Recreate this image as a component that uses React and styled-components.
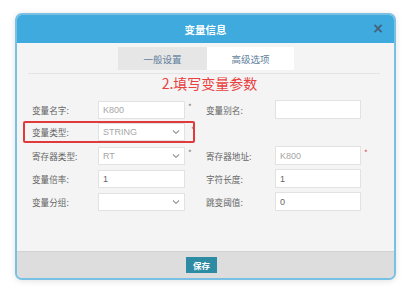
import React from "react";
import styled, { createGlobalStyle } from "styled-components";

const Global = createGlobalStyle`
  html, body { margin: 0; padding: 0; background: #ffffff; }
  body { font-family: "Noto Sans CJK SC", "Noto Sans", sans-serif; }
`;

const Page = styled.div`
  width: 404px;
  height: 290px;
  box-sizing: border-box;
  padding: 13px 8px 0 15px;
  overflow: hidden;
`;

const Dialog = styled.div`
  width: 381px;
  height: 267px;
  box-sizing: border-box;
  border: 2px solid #79c0e5;
  border-radius: 7px;
  overflow: hidden;
  display: flex;
  flex-direction: column;
  background: #f4f4f4;
  box-shadow: 0 1px 6px rgba(0, 0, 0, 0.12);
`;

const Header = styled.div`
  height: 28px;
  flex: none;
  background: #3eaade;
  display: flex;
  align-items: center;
  justify-content: center;
  position: relative;
  color: #ffffff;
  font-size: 10.5px;
  font-weight: 700;
`;

const Close = styled.span`
  position: absolute;
  right: 10px;
  top: 6px;
  font-family: "DejaVu Sans", sans-serif;
  font-size: 14px;
  font-weight: 700;
  color: #44627a;
  line-height: 14px;
`;

const Body = styled.div`
  flex: 1;
  display: flex;
  flex-direction: column;
`;

const Tabs = styled.div`
  display: flex;
  justify-content: center;
  margin-top: 4px;
  padding-left: 1px;
`;

const Tab = styled.div`
  width: ${(p) => p.$w}px;
  height: 23px;
  display: flex;
  align-items: center;
  justify-content: center;
  font-size: 9.5px;
  color: #5f7f9c;
  background: ${(p) => (p.$active ? "#ffffff" : "#e6e6e6")};
`;

const Divider = styled.div`
  height: 1px;
  margin: 3px 14px 0 11px;
  background: #e4e4e4;
`;

const Note = styled.div`
  text-align: center;
  padding-left: 8px;
  font-size: 14px;
  line-height: 17px;
  height: 17px;
  margin-top: 1px;
  color: #e8413f;
  font-weight: 400;
`;

const Form = styled.div`
  display: flex;
  flex-direction: column;
  gap: 5px;
  margin-top: 8px;
`;

const Row = styled.div`
  position: relative;
  height: 18px;
  padding-left: 15px;
  display: grid;
  grid-template-columns: 66px 87px 21px 69px 86px 20px;
  align-items: center;
`;

const Label = styled.span`
  font-size: 8.6px;
  color: #666666;
  white-space: nowrap;
`;

const Field = styled.div`
  height: ${(p) => (p.$tall ? 19 : 18)}px;
  box-sizing: border-box;
  background: #ffffff;
  border: 1px solid #e2e2e2;
  display: flex;
  align-items: center;
  justify-content: space-between;
  padding: 0 4px 0 4px;
  font-family: "Liberation Sans", "Noto Sans", sans-serif;
  font-size: 9px;
  color: ${(p) => (p.$dark ? "#666666" : "#a6a6a6")};
`;

const Star = styled.span`
  font-size: 8px;
  color: ${(p) => (p.$red ? "#e04444" : "#777777")};
  padding-left: ${(p) => (p.$in ? 6 : 3)}px;
  align-self: start;
  margin-top: 1px;
`;

const Highlight = styled.div`
  position: absolute;
  left: 6px;
  top: -2px;
  width: 172px;
  height: 22px;
  box-sizing: border-box;
  border: 2px solid #e03a3a;
  border-radius: 2px;
  pointer-events: none;
`;

const Footer = styled.div`
  height: 26px;
  flex: none;
  background: #dddddd;
  border-top: 1px solid #d2d2d2;
  display: flex;
  align-items: center;
  justify-content: center;
`;

const SaveButton = styled.button`
  width: 31px;
  height: 16px;
  margin-right: 8px;
  border: none;
  padding: 0;
  background: #2d8ca4;
  color: #ffffff;
  font-family: "Noto Sans CJK SC", sans-serif;
  font-size: 8.5px;
  font-weight: 700;
`;

const Chevron = () => (
  <svg width="8" height="6" viewBox="0 0 8 6">
    <path d="M1 1.5 L4 4.5 L7 1.5" fill="none" stroke="#9a9a9a" strokeWidth="1.1" />
  </svg>
);

const Select = ({ value }) => (
  <Field>
    <span>{value}</span>
    <Chevron />
  </Field>
);

export default function App() {
  return (
    <>
      <Global />
      <Page>
        <Dialog>
          <Header>
            变量信息
            <Close>×</Close>
          </Header>
          <Body>
            <Tabs>
              <Tab $w={89}>一般设置</Tab>
              <Tab $w={87} $active>
                高级选项
              </Tab>
            </Tabs>
            <Divider />
            <Note>2.填写变量参数</Note>
            <Form>
              <Row>
                <Label>变量名字:</Label>
                <Field>K800</Field>
                <Star>*</Star>
                <Label>变量别名:</Label>
                <Field $tall />
                <span />
              </Row>
              <Row>
                <Highlight />
                <Label>变量类型:</Label>
                <Select value="STRING" />
                <Star $in>*</Star>
                <span />
                <span />
                <span />
              </Row>
              <Row>
                <Label>寄存器类型:</Label>
                <Select value="RT" />
                <Star>*</Star>
                <Label>寄存器地址:</Label>
                <Field $tall>K800</Field>
                <Star $red>*</Star>
              </Row>
              <Row>
                <Label>变量倍率:</Label>
                <Field $dark>1</Field>
                <span />
                <Label>字符长度:</Label>
                <Field $tall $dark>1</Field>
                <span />
              </Row>
              <Row>
                <Label>变量分组:</Label>
                <Select value="" />
                <span />
                <Label>跳变阈值:</Label>
                <Field $tall $dark>0</Field>
                <span />
              </Row>
            </Form>
          </Body>
          <Footer>
            <SaveButton>保存</SaveButton>
          </Footer>
        </Dialog>
      </Page>
    </>
  );
}
